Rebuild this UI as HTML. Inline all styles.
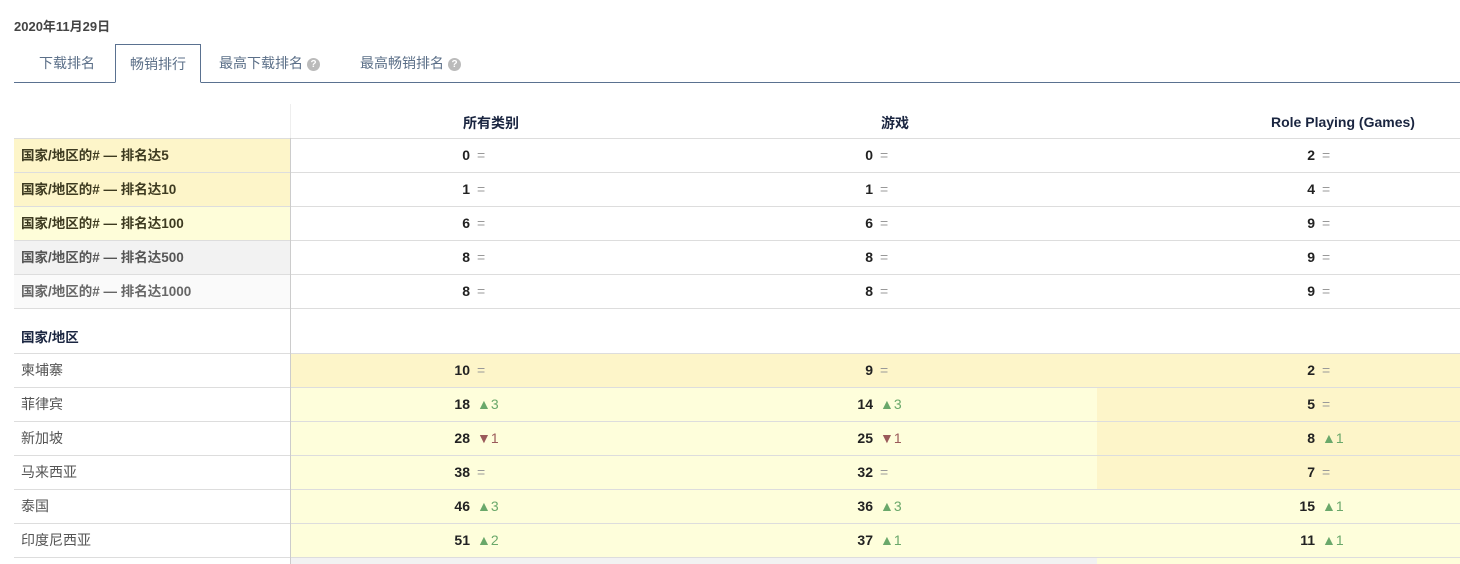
<!DOCTYPE html>
<html><head><meta charset="utf-8"><style>
*{margin:0;padding:0;box-sizing:border-box}
body{width:1460px;height:564px;overflow:hidden;background:#fff;font-family:"Liberation Sans","Noto Sans CJK SC",sans-serif;position:relative;color:#333}
.a{position:absolute}
.date{left:14px;top:16px;font-size:13px;font-weight:bold;color:#444}
.tabline{left:14px;top:82px;width:1446px;height:1px;background:#5a7190}
.tab{top:44px;height:39px;font-size:14px;color:#5b6f88;line-height:38px}
.act{left:115px;width:86px;border:1px solid #5a7190;border-bottom:1px solid #fff;background:#fff;text-align:center}
.q{display:inline-block;width:13px;height:13px;border-radius:50%;background:#bbb;color:#fff;font-size:10px;line-height:13px;text-align:center;font-weight:bold;vertical-align:1px;margin-left:4px}
.ln{left:14px;width:1446px;height:1px;background:#ddd}
.lab{left:14px;width:276px;height:33px;line-height:33px;padding-left:7px;font-size:13.5px}
.b{font-weight:bold}
.n{width:60px;text-align:right;font-weight:bold;font-size:14px;line-height:33px;color:#222}
.d{line-height:33px;font-size:14px}
.eq{color:#999}
.up{color:#6aa86a}
.dn{color:#9a5a5a}
.hd{top:113px;font-size:14px;font-weight:bold;color:#1a2540}
</style></head><body>
<div class="a date">2020年11月29日</div>
<div class="a tabline"></div>
<div class="a tab" style="left:39px">下载排名</div>
<div class="a tab act">畅销排行</div>
<div class="a tab" style="left:219px">最高下载排名<span class="q">?</span></div>
<div class="a tab" style="left:360px">最高畅销排名<span class="q">?</span></div>

<div class="a" style="left:290px;top:104px;width:1px;height:34px;background:#eee"></div>
<div class="a hd" style="left:463px">所有类别</div>
<div class="a hd" style="left:881px">游戏</div>
<div class="a hd" style="left:1271px;top:114px">Role Playing (Games)</div>

<!-- summary rows -->
<div class="a lab b" style="top:139px;background:#fdf5c9;color:#3d3a20">国家/地区的# — 排名达5</div>
<div class="a lab b" style="top:173px;background:#fdf5c9;color:#3d3a20">国家/地区的# — 排名达10</div>
<div class="a lab b" style="top:207px;background:#fefdd9;color:#3d3a20">国家/地区的# — 排名达100</div>
<div class="a lab b" style="top:241px;background:#f2f2f2;color:#555">国家/地区的# — 排名达500</div>
<div class="a lab b" style="top:275px;background:#fafafa;color:#666">国家/地区的# — 排名达1000</div>

<div class="a lab b" style="top:321px;color:#1a2540;background:none">国家/地区</div>

<!-- data backgrounds -->
<div class="a" style="left:291px;top:354px;width:1169px;height:33px;background:#fdf5c9"></div>
<div class="a" style="left:291px;top:388px;width:806px;height:101px;background:#fefedb"></div>
<div class="a" style="left:1097px;top:388px;width:363px;height:101px;background:#fdf5c9"></div>
<div class="a" style="left:291px;top:490px;width:1169px;height:67px;background:#fefedb"></div>
<div class="a" style="left:291px;top:558px;width:806px;height:6px;background:#f2f2f2"></div>
<div class="a" style="left:1097px;top:558px;width:363px;height:6px;background:#fefedb"></div>

<div class="a ln" style="top:138px"></div>
<div class="a ln" style="top:172px"></div>
<div class="a ln" style="top:206px"></div>
<div class="a ln" style="top:240px"></div>
<div class="a ln" style="top:274px"></div>
<div class="a ln" style="top:308px"></div>
<div class="a ln" style="top:353px"></div>
<div class="a ln" style="top:387px"></div>
<div class="a ln" style="top:421px"></div>
<div class="a ln" style="top:455px"></div>
<div class="a ln" style="top:489px"></div>
<div class="a ln" style="top:523px"></div>
<div class="a ln" style="top:557px"></div>

<div class="a lab" style="top:354px;color:#555;font-size:14px">柬埔寨</div>
<div class="a lab" style="top:388px;color:#555;font-size:14px">菲律宾</div>
<div class="a lab" style="top:422px;color:#555;font-size:14px">新加坡</div>
<div class="a lab" style="top:456px;color:#555;font-size:14px">马来西亚</div>
<div class="a lab" style="top:490px;color:#555;font-size:14px">泰国</div>
<div class="a lab" style="top:524px;color:#555;font-size:14px">印度尼西亚</div>

<div class="a" style="left:290px;top:138px;width:1px;height:426px;background:#ccc"></div>

<div id="vals"></div>
<script>
var rows=[[139,["0","="],["0","="],["2","="]],[173,["1","="],["1","="],["4","="]],[207,["6","="],["6","="],["9","="]],[241,["8","="],["8","="],["9","="]],[275,["8","="],["8","="],["9","="]],
[354,["10","="],["9","="],["2","="]],[388,["18","▲3"],["14","▲3"],["5","="]],[422,["28","▼1"],["25","▼1"],["8","▲1"]],[456,["38","="],["32","="],["7","="]],[490,["46","▲3"],["36","▲3"],["15","▲1"]],[524,["51","▲2"],["37","▲1"],["11","▲1"]]];
var xs=[470,873,1315],h="";
rows.forEach(function(r){for(var i=0;i<3;i++){var v=r[i+1];var cl=v[1]=="="?"eq":(v[1][0]=="▲"?"up":"dn");
h+='<div class="a n" style="top:'+r[0]+'px;left:'+(xs[i]-60)+'px">'+v[0]+'</div><div class="a d '+cl+'" style="top:'+r[0]+'px;left:'+(xs[i]+7)+'px">'+v[1]+'</div>';}});
document.getElementById("vals").innerHTML=h;
</script>
</body></html>
